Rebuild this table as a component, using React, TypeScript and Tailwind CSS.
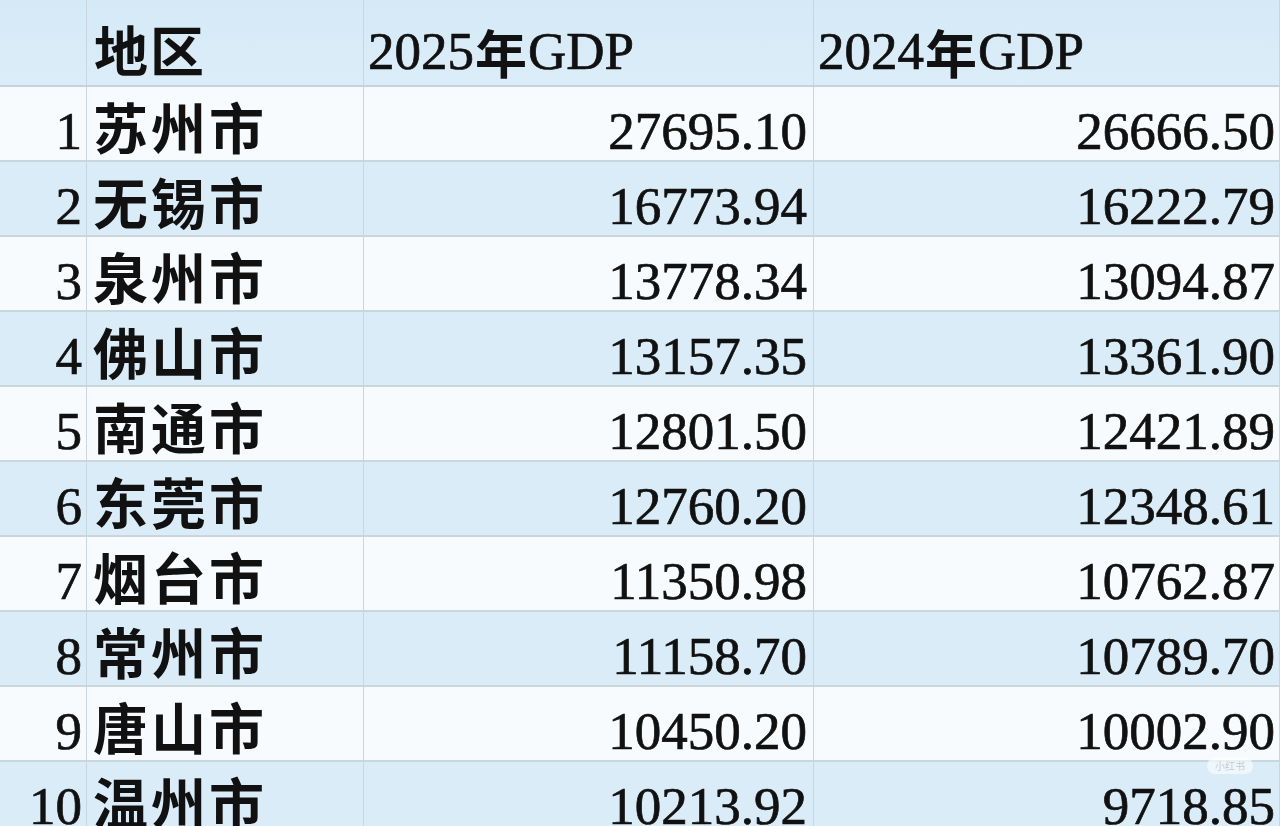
const rows = [
  { rank: 1, city: "苏州市", y25: "27695.10", y24: "26666.50" },
  { rank: 2, city: "无锡市", y25: "16773.94", y24: "16222.79" },
  { rank: 3, city: "泉州市", y25: "13778.34", y24: "13094.87" },
  { rank: 4, city: "佛山市", y25: "13157.35", y24: "13361.90" },
  { rank: 5, city: "南通市", y25: "12801.50", y24: "12421.89" },
  { rank: 6, city: "东莞市", y25: "12760.20", y24: "12348.61" },
  { rank: 7, city: "烟台市", y25: "11350.98", y24: "10762.87" },
  { rank: 8, city: "常州市", y25: "11158.70", y24: "10789.70" },
  { rank: 9, city: "唐山市", y25: "10450.20", y24: "10002.90" },
  { rank: 10, city: "温州市", y25: "10213.92", y24: "9718.85" },
];

const serif = "font-['Liberation_Serif','Noto_Sans_CJK_SC',serif] [-webkit-text-stroke:0.7px_#111]";
const cjk = "font-['Noto_Sans_CJK_SC',sans-serif] [-webkit-text-stroke:0px]";

export default function App() {
  return (
    <div className={`w-[1280px] h-[826px] overflow-hidden bg-[#f6fafd] text-[#111] ${serif}`}>
      {/* header */}
      <div className="grid grid-cols-[87px_277px_450px_466px] h-[87px] bg-gradient-to-b from-[#d5eaf7] to-[#dbedf8] border-b-2 border-[#c6d3dc]">
        <div className="border-r border-[#c9d6de]" />
        <div className={`border-r border-[#c9d6de] flex items-center pl-[7px] pt-[12px] text-[54px] font-bold tracking-[2px] leading-none ${cjk}`}>
          地区
        </div>
        <div className="border-r border-[#c9d6de] flex items-center pl-[4px] pt-[18px] text-[53px] leading-none">
          2025<span className={`font-bold ${cjk} text-[52px] mx-[1px]`}>年</span>GDP
        </div>
        <div className="border-r border-[#c9d6de] flex items-center pl-[4px] pt-[18px] text-[53px] leading-none">
          2024<span className={`font-bold ${cjk} text-[52px] mx-[1px]`}>年</span>GDP
        </div>
      </div>

      {rows.map((r, i) => (
        <div
          key={r.rank}
          className={`grid grid-cols-[87px_277px_450px_466px] h-[75px] border-b-2 border-[#cad6de] ${
            i % 2 === 0 ? "bg-[#f8fbfd]" : "bg-[#d9ecf8]"
          }`}
        >
          <div className="border-r border-[#c9d6de] flex items-center justify-end pr-[4px] pt-[16px] text-[53px] leading-none">
            {r.rank}
          </div>
          <div className={`border-r border-[#c9d6de] flex items-center pl-[6px] pt-[4px] text-[55px] font-bold tracking-[3px] leading-none ${cjk}`}>
            {r.city}
          </div>
          <div className="border-r border-[#c9d6de] flex items-center justify-end pr-[6px] pt-[16px] text-[53px] leading-none">
            {r.y25}
          </div>
          <div className="relative border-r border-[#c9d6de] flex items-center justify-end pr-[4px] pt-[16px] text-[53px] leading-none">
            {r.y24}
            {r.rank === 10 && (
              <span className={`absolute right-[26px] top-[-4px] px-2 py-[1px] rounded-full bg-white/60 text-[10px] leading-[14px] text-[#c9ccd0] ${cjk}`}>
                小红书
              </span>
            )}
          </div>
        </div>
      ))}
    </div>
  );
}
